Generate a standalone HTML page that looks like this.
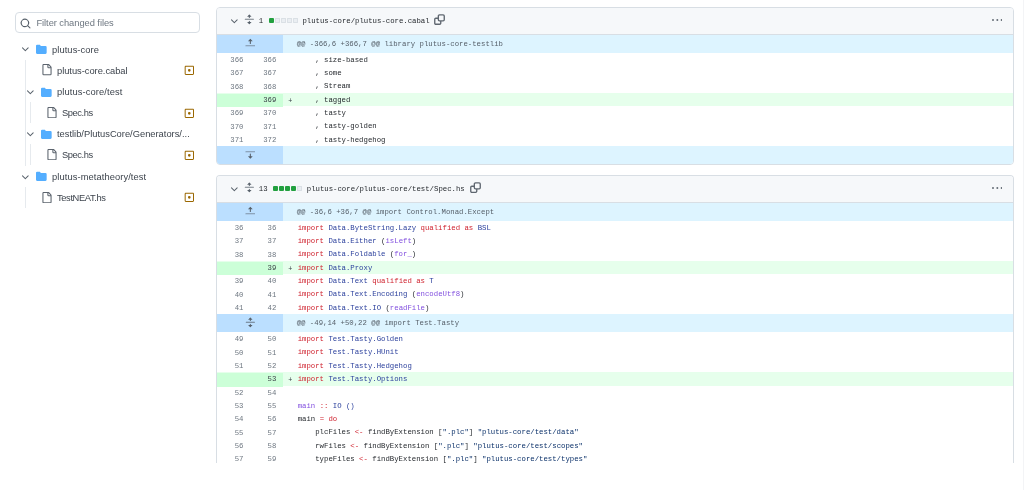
<!DOCTYPE html><html><head><meta charset="utf-8"><style>
*{box-sizing:border-box;margin:0;padding:0}
html,body{width:1024px;height:490px;overflow:hidden;background:#fff}
body{position:relative;-webkit-font-smoothing:antialiased;font-family:"Liberation Sans",sans-serif;color:#1f2328}
.ic{position:absolute;display:block}
.side{position:absolute;left:0;top:0;width:210px;height:490px;will-change:transform}
.search{position:absolute;left:14.5px;top:12.3px;width:185.2px;height:20.7px;border:1px solid #d8dee4;border-radius:4px;background:#fff}
.ph{position:absolute;letter-spacing:-0.05px;left:36.4px;top:13.3px;height:20.7px;line-height:20.7px;font-size:9.33px;color:#6e7781;white-space:nowrap}
.ti{position:absolute;height:21.333px;line-height:21.333px;font-size:9.33px;color:#3d444d;white-space:nowrap}
.vl{position:absolute;width:1px}
.box{position:absolute;will-change:transform;left:216px;width:797.7px;border:1px solid #d8dee4;border-radius:4px;overflow:hidden;font-family:"Liberation Mono",monospace;font-size:7.32px}
.box.cut{border-bottom:none;border-bottom-left-radius:0;border-bottom-right-radius:0;height:288px}
.hdr{position:relative;height:27px;background:#f6f8fa;border-bottom:1px solid #d8dee4}
.hdr .ic{position:absolute}
.cnt{position:absolute;left:41.8px;top:0;line-height:26px;height:26px;color:#1f2328}
.sqs{position:absolute;top:9.6px;height:5.2px;display:flex;gap:0.9px}
.sq{display:block;width:5.2px;height:5.2px;border-radius:1px}
.fn{position:absolute;top:0;line-height:26px;color:#1f2328;white-space:nowrap}
.hk{display:flex;height:18px;background:#ddf4ff}
.hk .hn{width:65.8px;background:#bbdfff;position:relative}
.hic{position:absolute;left:27.6px;top:2.6px;width:10.667px;height:10.667px;fill:#57606a}
.hk .hl{flex:1;padding-left:13.9px;line-height:18px;color:#57606a;white-space:pre}
.rw{display:flex;height:13.333px;line-height:13.333px;white-space:pre}
.rw .n{width:32.9px;text-align:right;padding-right:6.4px;color:#6e7781;position:relative;top:1.0px}
.rw .m{width:14.9px;text-align:center;color:#3b4148;position:relative;top:1.6px;font-size:6.8px}
.rw .c{flex:1;color:#1f2328;padding-left:0;position:relative;top:0.75px}
.rw.add{background:#e6ffec}
.rw.add .n{background:#ccffd8;color:#3b4148}
</style></head><body><div class="side"><div class="search"></div><svg class="ic" style="left:19.9px;top:18.4px;width:11.2px;height:11.2px;fill:#57606a" viewBox="0 0 16 16"><path d="M10.68 11.74a6 6 0 0 1-7.922-8.982 6 6 0 0 1 8.982 7.922l3.04 3.04a.749.749 0 0 1-.326 1.275.749.749 0 0 1-.734-.215ZM11.5 7a4.499 4.499 0 1 0-8.997 0A4.499 4.499 0 0 0 11.5 7Z"/></svg><div class="ph">Filter changed files</div><svg class="ic" style="left:19.9px;top:44.465px;width:10.6667px;height:10.6667px;fill:#57606a" viewBox="0 0 16 16"><path d="M12.78 5.22a.749.749 0 0 1 0 1.06l-4.25 4.25a.749.749 0 0 1-1.06 0L3.22 6.28a.749.749 0 1 1 1.06-1.06L8 8.939l3.72-3.719a.749.749 0 0 1 1.06 0Z"/></svg><svg class="ic" style="left:35.9px;top:44.265px;width:10.6667px;height:10.6667px;fill:#54aeff" viewBox="0 0 16 16"><path d="M1.75 1A1.75 1.75 0 0 0 0 2.75v10.5C0 14.216.784 15 1.75 15h12.5A1.75 1.75 0 0 0 16 13.25v-8.5A1.75 1.75 0 0 0 14.25 3H7.5a.25.25 0 0 1-.2-.1l-.9-1.2C6.07 1.26 5.55 1 5 1H1.75Z"/></svg><div class="ti" style="left:52.0px;top:39.5px;letter-spacing:0.08px">plutus-core</div><svg class="ic" style="left:40.9px;top:64.385px;width:11.3px;height:11.3px;fill:#5c646e" viewBox="0 0 16 16"><path d="M2 1.75C2 .784 2.784 0 3.75 0h6.586c.464 0 .909.184 1.237.513l2.914 2.914c.329.328.513.773.513 1.237v9.586A1.75 1.75 0 0 1 13.25 16h-9.5A1.75 1.75 0 0 1 2 14.25Zm1.75-.25a.25.25 0 0 0-.25.25v12.5c0 .138.112.25.25.25h9.5a.25.25 0 0 0 .25-.25V6h-2.75A1.75 1.75 0 0 1 9 4.25V1.5Zm6.75.062V4.25c0 .138.112.25.25.25h2.688l-.011-.013-2.914-2.914-.013-.011Z"/></svg><svg class="ic" style="left:183.8px;top:65.255px;width:10.6667px;height:10.6667px;fill:#9a6700" viewBox="0 0 16 16"><path d="M13.25 1c.966 0 1.75.784 1.75 1.75v10.5A1.75 1.75 0 0 1 13.25 15H2.75A1.75 1.75 0 0 1 1 13.25V2.75C1 1.784 1.784 1 2.75 1ZM2.75 2.5a.25.25 0 0 0-.25.25v10.5c0 .138.112.25.25.25h10.5a.25.25 0 0 0 .25-.25V2.75a.25.25 0 0 0-.25-.25ZM8 10a2 2 0 1 1-.001-3.999A2 2 0 0 1 8 10Z"/></svg><div class="ti" style="left:57.0px;top:60.69px;letter-spacing:-0.03px">plutus-core.cabal</div><svg class="ic" style="left:24.9px;top:86.845px;width:10.6667px;height:10.6667px;fill:#57606a" viewBox="0 0 16 16"><path d="M12.78 5.22a.749.749 0 0 1 0 1.06l-4.25 4.25a.749.749 0 0 1-1.06 0L3.22 6.28a.749.749 0 1 1 1.06-1.06L8 8.939l3.72-3.719a.749.749 0 0 1 1.06 0Z"/></svg><svg class="ic" style="left:40.9px;top:86.645px;width:10.6667px;height:10.6667px;fill:#54aeff" viewBox="0 0 16 16"><path d="M1.75 1A1.75 1.75 0 0 0 0 2.75v10.5C0 14.216.784 15 1.75 15h12.5A1.75 1.75 0 0 0 16 13.25v-8.5A1.75 1.75 0 0 0 14.25 3H7.5a.25.25 0 0 1-.2-.1l-.9-1.2C6.07 1.26 5.55 1 5 1H1.75Z"/></svg><div class="ti" style="left:57.0px;top:81.88px;letter-spacing:0.1px">plutus-core/test</div><svg class="ic" style="left:46.3px;top:106.76500000000001px;width:11.3px;height:11.3px;fill:#5c646e" viewBox="0 0 16 16"><path d="M2 1.75C2 .784 2.784 0 3.75 0h6.586c.464 0 .909.184 1.237.513l2.914 2.914c.329.328.513.773.513 1.237v9.586A1.75 1.75 0 0 1 13.25 16h-9.5A1.75 1.75 0 0 1 2 14.25Zm1.75-.25a.25.25 0 0 0-.25.25v12.5c0 .138.112.25.25.25h9.5a.25.25 0 0 0 .25-.25V6h-2.75A1.75 1.75 0 0 1 9 4.25V1.5Zm6.75.062V4.25c0 .138.112.25.25.25h2.688l-.011-.013-2.914-2.914-.013-.011Z"/></svg><svg class="ic" style="left:183.8px;top:107.635px;width:10.6667px;height:10.6667px;fill:#9a6700" viewBox="0 0 16 16"><path d="M13.25 1c.966 0 1.75.784 1.75 1.75v10.5A1.75 1.75 0 0 1 13.25 15H2.75A1.75 1.75 0 0 1 1 13.25V2.75C1 1.784 1.784 1 2.75 1ZM2.75 2.5a.25.25 0 0 0-.25.25v10.5c0 .138.112.25.25.25h10.5a.25.25 0 0 0 .25-.25V2.75a.25.25 0 0 0-.25-.25ZM8 10a2 2 0 1 1-.001-3.999A2 2 0 0 1 8 10Z"/></svg><div class="ti" style="left:62.0px;top:103.07000000000001px;letter-spacing:-0.42px">Spec.hs</div><svg class="ic" style="left:24.9px;top:129.225px;width:10.6667px;height:10.6667px;fill:#57606a" viewBox="0 0 16 16"><path d="M12.78 5.22a.749.749 0 0 1 0 1.06l-4.25 4.25a.749.749 0 0 1-1.06 0L3.22 6.28a.749.749 0 1 1 1.06-1.06L8 8.939l3.72-3.719a.749.749 0 0 1 1.06 0Z"/></svg><svg class="ic" style="left:40.9px;top:129.025px;width:10.6667px;height:10.6667px;fill:#54aeff" viewBox="0 0 16 16"><path d="M1.75 1A1.75 1.75 0 0 0 0 2.75v10.5C0 14.216.784 15 1.75 15h12.5A1.75 1.75 0 0 0 16 13.25v-8.5A1.75 1.75 0 0 0 14.25 3H7.5a.25.25 0 0 1-.2-.1l-.9-1.2C6.07 1.26 5.55 1 5 1H1.75Z"/></svg><div class="ti" style="left:57.0px;top:124.26px;letter-spacing:0.0px">testlib/PlutusCore/Generators/...</div><svg class="ic" style="left:46.3px;top:149.14499999999998px;width:11.3px;height:11.3px;fill:#5c646e" viewBox="0 0 16 16"><path d="M2 1.75C2 .784 2.784 0 3.75 0h6.586c.464 0 .909.184 1.237.513l2.914 2.914c.329.328.513.773.513 1.237v9.586A1.75 1.75 0 0 1 13.25 16h-9.5A1.75 1.75 0 0 1 2 14.25Zm1.75-.25a.25.25 0 0 0-.25.25v12.5c0 .138.112.25.25.25h9.5a.25.25 0 0 0 .25-.25V6h-2.75A1.75 1.75 0 0 1 9 4.25V1.5Zm6.75.062V4.25c0 .138.112.25.25.25h2.688l-.011-.013-2.914-2.914-.013-.011Z"/></svg><svg class="ic" style="left:183.8px;top:150.015px;width:10.6667px;height:10.6667px;fill:#9a6700" viewBox="0 0 16 16"><path d="M13.25 1c.966 0 1.75.784 1.75 1.75v10.5A1.75 1.75 0 0 1 13.25 15H2.75A1.75 1.75 0 0 1 1 13.25V2.75C1 1.784 1.784 1 2.75 1ZM2.75 2.5a.25.25 0 0 0-.25.25v10.5c0 .138.112.25.25.25h10.5a.25.25 0 0 0 .25-.25V2.75a.25.25 0 0 0-.25-.25ZM8 10a2 2 0 1 1-.001-3.999A2 2 0 0 1 8 10Z"/></svg><div class="ti" style="left:62.0px;top:145.45px;letter-spacing:-0.42px">Spec.hs</div><svg class="ic" style="left:19.9px;top:171.605px;width:10.6667px;height:10.6667px;fill:#57606a" viewBox="0 0 16 16"><path d="M12.78 5.22a.749.749 0 0 1 0 1.06l-4.25 4.25a.749.749 0 0 1-1.06 0L3.22 6.28a.749.749 0 1 1 1.06-1.06L8 8.939l3.72-3.719a.749.749 0 0 1 1.06 0Z"/></svg><svg class="ic" style="left:35.9px;top:171.405px;width:10.6667px;height:10.6667px;fill:#54aeff" viewBox="0 0 16 16"><path d="M1.75 1A1.75 1.75 0 0 0 0 2.75v10.5C0 14.216.784 15 1.75 15h12.5A1.75 1.75 0 0 0 16 13.25v-8.5A1.75 1.75 0 0 0 14.25 3H7.5a.25.25 0 0 1-.2-.1l-.9-1.2C6.07 1.26 5.55 1 5 1H1.75Z"/></svg><div class="ti" style="left:52.0px;top:166.64000000000001px;letter-spacing:0.09px">plutus-metatheory/test</div><svg class="ic" style="left:40.9px;top:191.525px;width:11.3px;height:11.3px;fill:#5c646e" viewBox="0 0 16 16"><path d="M2 1.75C2 .784 2.784 0 3.75 0h6.586c.464 0 .909.184 1.237.513l2.914 2.914c.329.328.513.773.513 1.237v9.586A1.75 1.75 0 0 1 13.25 16h-9.5A1.75 1.75 0 0 1 2 14.25Zm1.75-.25a.25.25 0 0 0-.25.25v12.5c0 .138.112.25.25.25h9.5a.25.25 0 0 0 .25-.25V6h-2.75A1.75 1.75 0 0 1 9 4.25V1.5Zm6.75.062V4.25c0 .138.112.25.25.25h2.688l-.011-.013-2.914-2.914-.013-.011Z"/></svg><svg class="ic" style="left:183.8px;top:192.395px;width:10.6667px;height:10.6667px;fill:#9a6700" viewBox="0 0 16 16"><path d="M13.25 1c.966 0 1.75.784 1.75 1.75v10.5A1.75 1.75 0 0 1 13.25 15H2.75A1.75 1.75 0 0 1 1 13.25V2.75C1 1.784 1.784 1 2.75 1ZM2.75 2.5a.25.25 0 0 0-.25.25v10.5c0 .138.112.25.25.25h10.5a.25.25 0 0 0 .25-.25V2.75a.25.25 0 0 0-.25-.25ZM8 10a2 2 0 1 1-.001-3.999A2 2 0 0 1 8 10Z"/></svg><div class="ti" style="left:57.0px;top:187.83px;letter-spacing:-0.38px">TestNEAT.hs</div><div class="vl" style="left:25.2px;top:59.69px;height:105.95000000000002px;background:#e6eaee"></div><div class="vl" style="left:30.2px;top:101.57000000000001px;height:21.189999999999998px;background:#e6eaee"></div><div class="vl" style="left:30.2px;top:143.95px;height:21.190000000000026px;background:#e6eaee"></div><div class="vl" style="left:25.2px;top:186.83px;height:21.189999999999998px;background:#e6eaee"></div></div><div class="box" style="top:7px;"><div class="hdr"><svg class="ic" style="left:11.599999999999994px;top:8.0px;width:10.6667px;height:10.6667px;fill:#57606a" viewBox="0 0 16 16"><path d="M12.78 5.22a.749.749 0 0 1 0 1.06l-4.25 4.25a.749.749 0 0 1-1.06 0L3.22 6.28a.749.749 0 1 1 1.06-1.06L8 8.939l3.72-3.719a.749.749 0 0 1 1.06 0Z"/></svg><svg class="ic" style="left:27.19999999999999px;top:6.300000000000001px;width:10.6667px;height:10.6667px;fill:#57606a" viewBox="0 0 16 16"><path d="M8.177.677l2.896 2.896a.25.25 0 0 1-.177.427H8.75v1.25a.75.75 0 0 1-1.5 0V4H5.104a.25.25 0 0 1-.177-.427L7.823.677a.25.25 0 0 1 .354 0ZM7.25 10.75a.75.75 0 0 1 1.5 0V12h2.146a.25.25 0 0 1 .177.427l-2.896 2.896a.25.25 0 0 1-.354 0l-2.896-2.896A.25.25 0 0 1 5.104 12H7.25v-1.25Z"/><rect x="1" y="7.25" width="14" height="1.5" rx=".75" opacity=".8"/></svg><div class="cnt">1</div><div class="sqs" style="left:51.60000000000002px"><span class="sq" style="background:#22a03f"></span><span class="sq" style="background:#eaeef2;box-shadow:inset 0 0 0 0.7px #d5dbe1"></span><span class="sq" style="background:#eaeef2;box-shadow:inset 0 0 0 0.7px #d5dbe1"></span><span class="sq" style="background:#eaeef2;box-shadow:inset 0 0 0 0.7px #d5dbe1"></span><span class="sq" style="background:#eaeef2;box-shadow:inset 0 0 0 0.7px #d5dbe1"></span></div><div class="fn" style="left:85.39999999999998px">plutus-core/plutus-core.cabal</div><svg class="ic" style="left:217.0px;top:6.0px;width:12px;height:12px" viewBox="0 0 12 12" fill="none" stroke="#5f6770" stroke-width="1.35"><rect x="0.75" y="4.2" width="6.0" height="6.1" rx="1.1"/><rect x="4.35" y="0.9" width="5.9" height="6.0" rx="1.1" fill="#f6f8fa"/></svg><svg class="ic" style="left:774.8px;top:6.9px;width:10.6667px;height:10.6667px;fill:#656d76" viewBox="0 0 16 16"><path d="M8 9a1.5 1.5 0 1 0 0-3 1.5 1.5 0 0 0 0 3ZM1.5 9a1.5 1.5 0 1 0 0-3 1.5 1.5 0 0 0 0 3Zm13 0a1.5 1.5 0 1 0 0-3 1.5 1.5 0 0 0 0 3Z"/></svg></div><div class="hk"><div class="hn"><svg class="hic" viewBox="0 0 16 16"><path d="M8 1.2 11.6 4.9H8.8V8.3a.8.8 0 0 1-1.6 0V4.9H4.4Z"/><rect x="0.6" y="10.9" width="14.8" height="1.6" rx=".6" opacity=".6"/></svg></div><div class="hl">@@ -366,6 +366,7 @@ library plutus-core-testlib</div></div><div class="rw"><div class="n">366</div><div class="n">366</div><div class="m"></div><div class="c">    , size-based</div></div><div class="rw"><div class="n">367</div><div class="n">367</div><div class="m"></div><div class="c">    , some</div></div><div class="rw"><div class="n">368</div><div class="n">368</div><div class="m"></div><div class="c">    , Stream</div></div><div class="rw add"><div class="n"></div><div class="n">369</div><div class="m">+</div><div class="c">    , tagged</div></div><div class="rw"><div class="n">369</div><div class="n">370</div><div class="m"></div><div class="c">    , tasty</div></div><div class="rw"><div class="n">370</div><div class="n">371</div><div class="m"></div><div class="c">    , tasty-golden</div></div><div class="rw"><div class="n">371</div><div class="n">372</div><div class="m"></div><div class="c">    , tasty-hedgehog</div></div><div class="hk end"><div class="hn"><svg class="hic" viewBox="0 0 16 16"><path d="M8 14.6 11.6 10.9H8.8V7.5a.8.8 0 0 0-1.6 0V10.9H4.4Z"/><rect x="0.6" y="3.4" width="14.8" height="1.6" rx=".6" opacity=".6"/></svg></div><div class="hl"></div></div></div><div class="box cut" style="top:175px;"><div class="hdr"><svg class="ic" style="left:11.599999999999994px;top:8.0px;width:10.6667px;height:10.6667px;fill:#57606a" viewBox="0 0 16 16"><path d="M12.78 5.22a.749.749 0 0 1 0 1.06l-4.25 4.25a.749.749 0 0 1-1.06 0L3.22 6.28a.749.749 0 1 1 1.06-1.06L8 8.939l3.72-3.719a.749.749 0 0 1 1.06 0Z"/></svg><svg class="ic" style="left:27.19999999999999px;top:6.300000000000001px;width:10.6667px;height:10.6667px;fill:#57606a" viewBox="0 0 16 16"><path d="M8.177.677l2.896 2.896a.25.25 0 0 1-.177.427H8.75v1.25a.75.75 0 0 1-1.5 0V4H5.104a.25.25 0 0 1-.177-.427L7.823.677a.25.25 0 0 1 .354 0ZM7.25 10.75a.75.75 0 0 1 1.5 0V12h2.146a.25.25 0 0 1 .177.427l-2.896 2.896a.25.25 0 0 1-.354 0l-2.896-2.896A.25.25 0 0 1 5.104 12H7.25v-1.25Z"/><rect x="1" y="7.25" width="14" height="1.5" rx=".75" opacity=".8"/></svg><div class="cnt">13</div><div class="sqs" style="left:55.950000000000024px"><span class="sq" style="background:#22a03f"></span><span class="sq" style="background:#22a03f"></span><span class="sq" style="background:#22a03f"></span><span class="sq" style="background:#22a03f"></span><span class="sq" style="background:#eaeef2;box-shadow:inset 0 0 0 0.7px #d5dbe1"></span></div><div class="fn" style="left:89.74999999999997px">plutus-core/plutus-core/test/Spec.hs</div><svg class="ic" style="left:252.8px;top:6.0px;width:12px;height:12px" viewBox="0 0 12 12" fill="none" stroke="#5f6770" stroke-width="1.35"><rect x="0.75" y="4.2" width="6.0" height="6.1" rx="1.1"/><rect x="4.35" y="0.9" width="5.9" height="6.0" rx="1.1" fill="#f6f8fa"/></svg><svg class="ic" style="left:774.8px;top:6.9px;width:10.6667px;height:10.6667px;fill:#656d76" viewBox="0 0 16 16"><path d="M8 9a1.5 1.5 0 1 0 0-3 1.5 1.5 0 0 0 0 3ZM1.5 9a1.5 1.5 0 1 0 0-3 1.5 1.5 0 0 0 0 3Zm13 0a1.5 1.5 0 1 0 0-3 1.5 1.5 0 0 0 0 3Z"/></svg></div><div class="hk"><div class="hn"><svg class="hic" viewBox="0 0 16 16"><path d="M8 1.2 11.6 4.9H8.8V8.3a.8.8 0 0 1-1.6 0V4.9H4.4Z"/><rect x="0.6" y="10.9" width="14.8" height="1.6" rx=".6" opacity=".6"/></svg></div><div class="hl">@@ -36,6 +36,7 @@ import Control.Monad.Except</div></div><div class="rw"><div class="n">36</div><div class="n">36</div><div class="m"></div><div class="c"><span style="color:#cf222e">import</span> <span style="color:#2a3f9c">Data.ByteString.Lazy</span> <span style="color:#cf222e">qualified</span> <span style="color:#cf222e">as</span> <span style="color:#2a3f9c">BSL</span></div></div><div class="rw"><div class="n">37</div><div class="n">37</div><div class="m"></div><div class="c"><span style="color:#cf222e">import</span> <span style="color:#2a3f9c">Data.Either</span> (<span style="color:#8250df">isLeft</span>)</div></div><div class="rw"><div class="n">38</div><div class="n">38</div><div class="m"></div><div class="c"><span style="color:#cf222e">import</span> <span style="color:#2a3f9c">Data.Foldable</span> (<span style="color:#8250df">for_</span>)</div></div><div class="rw add"><div class="n"></div><div class="n">39</div><div class="m">+</div><div class="c"><span style="color:#cf222e">import</span> <span style="color:#2a3f9c">Data.Proxy</span></div></div><div class="rw"><div class="n">39</div><div class="n">40</div><div class="m"></div><div class="c"><span style="color:#cf222e">import</span> <span style="color:#2a3f9c">Data.Text</span> <span style="color:#cf222e">qualified</span> <span style="color:#cf222e">as</span> <span style="color:#2a3f9c">T</span></div></div><div class="rw"><div class="n">40</div><div class="n">41</div><div class="m"></div><div class="c"><span style="color:#cf222e">import</span> <span style="color:#2a3f9c">Data.Text.Encoding</span> (<span style="color:#8250df">encodeUtf8</span>)</div></div><div class="rw"><div class="n">41</div><div class="n">42</div><div class="m"></div><div class="c"><span style="color:#cf222e">import</span> <span style="color:#2a3f9c">Data.Text.IO</span> (<span style="color:#8250df">readFile</span>)</div></div><div class="hk"><div class="hn"><svg class="hic" viewBox="0 0 16 16"><path d="M8.177.677l2.896 2.896a.25.25 0 0 1-.177.427H8.75v1.25a.75.75 0 0 1-1.5 0V4H5.104a.25.25 0 0 1-.177-.427L7.823.677a.25.25 0 0 1 .354 0ZM7.25 10.75a.75.75 0 0 1 1.5 0V12h2.146a.25.25 0 0 1 .177.427l-2.896 2.896a.25.25 0 0 1-.354 0l-2.896-2.896A.25.25 0 0 1 5.104 12H7.25v-1.25Z"/><rect x="1" y="7.25" width="14" height="1.5" rx=".75" opacity=".8"/></svg></div><div class="hl">@@ -49,14 +50,22 @@ import Test.Tasty</div></div><div class="rw"><div class="n">49</div><div class="n">50</div><div class="m"></div><div class="c"><span style="color:#cf222e">import</span> <span style="color:#2a3f9c">Test.Tasty.Golden</span></div></div><div class="rw"><div class="n">50</div><div class="n">51</div><div class="m"></div><div class="c"><span style="color:#cf222e">import</span> <span style="color:#2a3f9c">Test.Tasty.HUnit</span></div></div><div class="rw"><div class="n">51</div><div class="n">52</div><div class="m"></div><div class="c"><span style="color:#cf222e">import</span> <span style="color:#2a3f9c">Test.Tasty.Hedgehog</span></div></div><div class="rw add"><div class="n"></div><div class="n">53</div><div class="m">+</div><div class="c"><span style="color:#cf222e">import</span> <span style="color:#2a3f9c">Test.Tasty.Options</span></div></div><div class="rw"><div class="n">52</div><div class="n">54</div><div class="m"></div><div class="c"></div></div><div class="rw"><div class="n">53</div><div class="n">55</div><div class="m"></div><div class="c"><span style="color:#8250df">main</span> <span style="color:#cf222e">::</span> <span style="color:#2a3f9c">IO</span> <span style="color:#2a3f9c">()</span></div></div><div class="rw"><div class="n">54</div><div class="n">56</div><div class="m"></div><div class="c">main <span style="color:#cf222e">=</span> <span style="color:#cf222e">do</span></div></div><div class="rw"><div class="n">55</div><div class="n">57</div><div class="m"></div><div class="c">    plcFiles <span style="color:#cf222e">&lt;-</span> findByExtension [<span style="color:#0a3069">".plc"</span>] <span style="color:#0a3069">"plutus-core/test/data"</span></div></div><div class="rw"><div class="n">56</div><div class="n">58</div><div class="m"></div><div class="c">    rwFiles <span style="color:#cf222e">&lt;-</span> findByExtension [<span style="color:#0a3069">".plc"</span>] <span style="color:#0a3069">"plutus-core/test/scopes"</span></div></div><div class="rw"><div class="n">57</div><div class="n">59</div><div class="m"></div><div class="c">    typeFiles <span style="color:#cf222e">&lt;-</span> findByExtension [<span style="color:#0a3069">".plc"</span>] <span style="color:#0a3069">"plutus-core/test/types"</span></div></div></div><div style="position:absolute;left:1023px;top:0;width:1px;height:490px;background:#f3f4f6"></div></body></html>
